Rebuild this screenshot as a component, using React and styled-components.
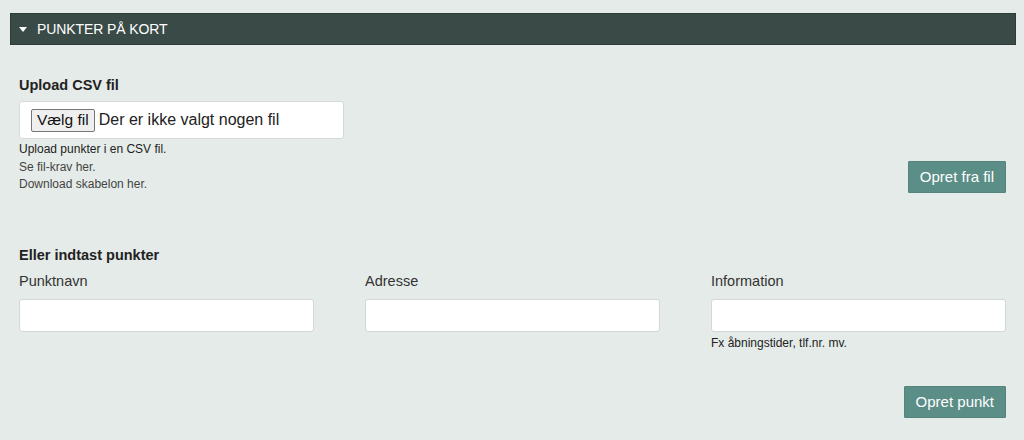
import React from 'react';
import styled, { createGlobalStyle } from 'styled-components';

const GlobalStyle = createGlobalStyle`
    body {
        margin: 0;
        background: #e5ebe8;
        font-family: "Liberation Sans", Arial, sans-serif;
        color: #222;
    }
`;

const Page = styled.div`
    padding: 13px 8px 0 10px;
`;

const Header = styled.div`
    display: flex;
    align-items: center;
    gap: 10px;
    height: 30px;
    padding-left: 8px;
    background: #3a4a47;
    border: 1px solid #2f3c3a;
    color: #fff;
    font-size: 14px;
    letter-spacing: -0.1px;
    text-transform: uppercase;
`;

const Caret = styled.span`
    width: 0;
    height: 0;
    border-left: 4px solid transparent;
    border-right: 4px solid transparent;
    border-top: 5px solid #fff;
    margin-top: 1px;
`;

const Body = styled.div`
    padding: 32px 8px 0 9px;
`;

const Section = styled.div`
    display: flex;
    flex-direction: column;
    width: 987px;
    margin-bottom: ${props => props.$gap || 0}px;
`;

const Heading = styled.h3`
    margin: 0 0 ${props => props.$space || 8}px;
    font-size: 14.5px;
    font-weight: bold;
    color: #222;
`;

const UploadRow = styled.div`
    display: flex;
    justify-content: space-between;
    align-items: flex-end;
`;

const FileBox = styled.div`
    display: flex;
    align-items: center;
    gap: 4px;
    width: 325px;
    height: 38px;
    box-sizing: border-box;
    padding: 0 11px;
    background: #fff;
    border: 1px solid #d6dad8;
    border-radius: 3px;
    font-size: 16px;
    color: #222;
`;

const FileButton = styled.button`
    height: 23px;
    padding: 0 5px;
    font-family: inherit;
    font-size: 15.5px;
    color: #111;
    background: #efefef;
    border: 1px solid #767676;
    border-radius: 2px;
`;

const Help = styled.div`
    font-size: 12px;
    line-height: 17.5px;
    color: ${props => props.$muted ? '#444' : '#222'};
`;

const HelpList = styled.div`
    margin-top: 2px;
`;

const Action = styled.button`
    height: 32px;
    padding: 0 11px;
    font-family: inherit;
    font-size: 15px;
    color: #fff;
    background: #5b8e86;
    border: 1px solid #55847d;
    border-radius: 1px;
    margin-bottom: ${props => props.$offset || 0}px;
`;

const Fields = styled.div`
    display: grid;
    grid-template-columns: repeat(3, 295px);
    justify-content: space-between;
`;

const Field = styled.div`
    display: flex;
    flex-direction: column;
`;

const Label = styled.label`
    font-size: 14.5px;
    color: #333;
    margin-bottom: 10px;
`;

const Input = styled.input`
    height: 33px;
    box-sizing: border-box;
    background: #fff;
    border: 1px solid #d3d7d5;
    border-radius: 3px;
`;

const Note = styled.div`
    margin-top: 4px;
    font-size: 12px;
    color: #222;
`;

const Footer = styled.div`
    display: flex;
    justify-content: flex-end;
    margin-top: 36px;
`;

const fields = [
    { label: 'Punktnavn' },
    { label: 'Adresse' },
    { label: 'Information', note: 'Fx åbningstider, tlf.nr. mv.' },
];

export default function App() {
    return (
        <Page>
            <GlobalStyle />
            <Header>
                <Caret />
                Punkter på kort
            </Header>
            <Body>
                <Section $gap={53}>
                    <Heading>Upload CSV fil</Heading>
                    <UploadRow>
                        <div>
                            <FileBox>
                                <FileButton>Vælg fil</FileButton>
                                Der er ikke valgt nogen fil
                            </FileBox>
                            <HelpList>
                                <Help>Upload punkter i en CSV fil.</Help>
                                <Help $muted>Se fil-krav her.</Help>
                                <Help $muted>Download skabelon her.</Help>
                            </HelpList>
                        </div>
                        <Action $offset={1}>Opret fra fil</Action>
                    </UploadRow>
                </Section>
                <Section>
                    <Heading $space={10}>Eller indtast punkter</Heading>
                    <Fields>
                        {fields.map(f => (
                            <Field key={f.label}>
                                <Label>{f.label}</Label>
                                <Input />
                                {f.note && <Note>{f.note}</Note>}
                            </Field>
                        ))}
                    </Fields>
                    <Footer>
                        <Action>Opret punkt</Action>
                    </Footer>
                </Section>
            </Body>
        </Page>
    );
}
